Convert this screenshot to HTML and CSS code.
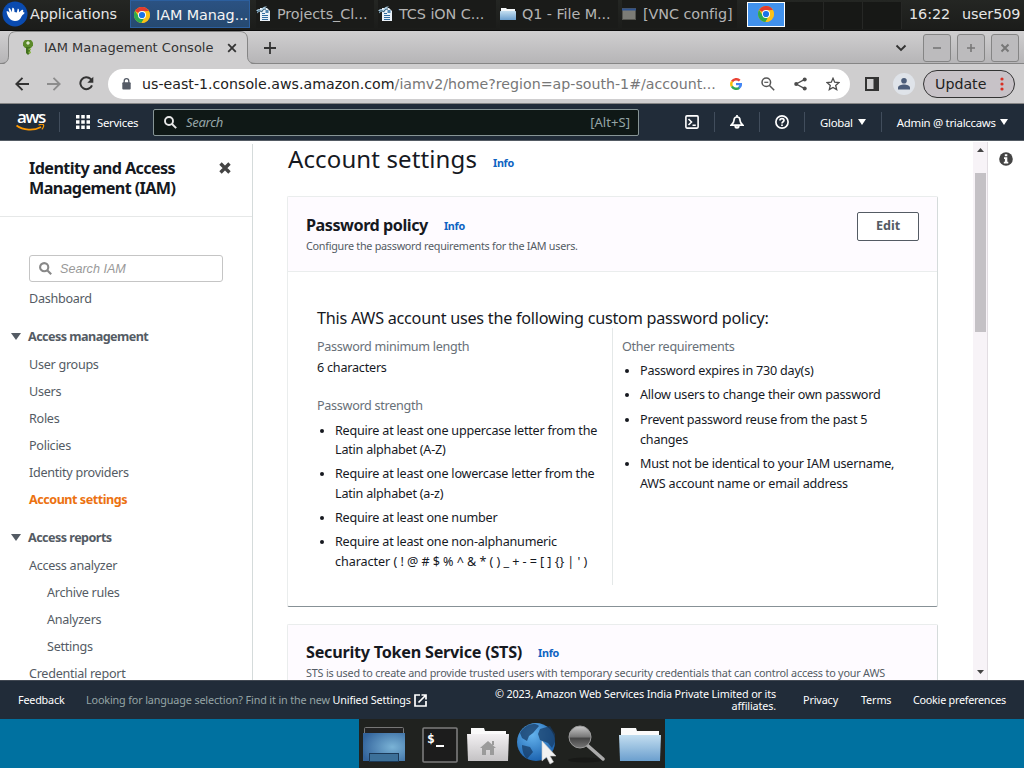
FILE: index.html
```html
<!DOCTYPE html>
<html lang="en">
<head>
<meta charset="utf-8">
<title>IAM Management Console</title>
<link rel="stylesheet" href="styles.css">
</head>
<body>
<svg width="0" height="0" class="defs">
  <defs>
    <linearGradient id="gFolder" x1="0" y1="0" x2="0" y2="1"><stop offset="0" stop-color="#c3def0"/><stop offset="1" stop-color="#6b9fce"/></linearGradient>
    <linearGradient id="gHome" x1="0" y1="0" x2="0" y2="1"><stop offset="0" stop-color="#f2f0f2"/><stop offset="1" stop-color="#c4c2c4"/></linearGradient>
    <radialGradient id="gDesk" cx=".7" cy=".5" r=".75"><stop offset="0" stop-color="#7ab3d6"/><stop offset="1" stop-color="#33649c"/></radialGradient>
    <radialGradient id="gGlobe" cx=".4" cy=".3" r=".7"><stop offset="0" stop-color="#65b4ee"/><stop offset="1" stop-color="#1d64b0"/></radialGradient>
    <linearGradient id="gLens" x1="0" y1="0" x2="0" y2="1"><stop offset="0" stop-color="#c9c9c9"/><stop offset=".5" stop-color="#777"/><stop offset=".55" stop-color="#444"/><stop offset="1" stop-color="#777"/></linearGradient>
    <symbol id="chrome" viewBox="0 0 16 16">
      <circle cx="8" cy="8" r="8" fill="#fbc116"/>
      <path d="M8 8L1.07 4A8 8 0 0 1 14.93 4L8 4.400Z" fill="#e33b2e"/>
      <path d="M1.070 4A8 8 0 0 0 7.500 15.980L11.120 9.800 8 8 4.880 9.800Z" fill="#2da94f"/>
      <path d="M8 4.400L14.930 4.400A8 8 0 0 1 7.500 15.980L11.120 9.800Z" fill="#fbc116"/>
      <circle cx="8" cy="8" r="4" fill="#fff"/><circle cx="8" cy="8" r="3.100" fill="#1a73e8"/>
    </symbol>
    <symbol id="writer" viewBox="0 0 15 16">
      <path d="M4 2h7l3 3v10H4z" fill="#eaf1f7"/>
      <path d="M6 7.500h3M6 9.500h6M6 11.500h6M6 13.500h6" stroke="#2f6ca0" stroke-width="1"/>
      <path d="M9.500 4h3v3h-3z" fill="#4d83ad"/>
      <path d="M0 4.500c2-2 4-2 5 0 1-3 3-4.500 6-4-2 1-3 3-4.500 6-2-1-4-1-5.500 1 .5-2 0-3-1-3z" fill="#a9cbe2"/>
      <path d="M1 6c2-2 4-1 4.500 0C6.500 4 8 3 10 3" fill="none" stroke="#24495f" stroke-width="1"/>
    </symbol>
  </defs>
</svg>

<div class="taskbar">
  <div class="apps">
    <svg width="26" height="26" viewBox="0 0 26 26"><circle cx="13" cy="13" r="12.500" fill="#0a4bb0"/><path d="M4.500 10.500c1-.6 2.200 0 3.200 1.500L6.500 7.500c1.200-.7 2.200.3 3.200 3.700l.6-4.200c1.200-.6 2.200.8 2.200 4l2.300.4.900-3.600c1.200-.4 1.500 1 1.300 3.400l3-2.500c1.400-.3 1.700 1 .9 2.400l1.600.4c.2 1.400-1.800 1.800-3 3.900-1.200 3.200-3.300 4.600-6.500 4.600-4.500 0-7.500-4-8.500-9.500z" fill="#fff"/></svg>
    <span>Applications</span>
  </div>
  <div class="task active"><svg width="16" height="16"><use href="#chrome"/></svg><span>IAM Manag...</span></div>
  <div class="task"><svg width="15" height="16"><use href="#writer"/></svg><span>Projects_Cl...</span></div>
  <div class="task"><svg width="15" height="16"><use href="#writer"/></svg><span>TCS iON C...</span></div>
  <div class="task"><svg width="16" height="14" viewBox="0 0 16 14"><path d="M1 1h5l1 1h8v5H1z" fill="#f3f6f8"/><rect x="0" y="4" width="16" height="9" rx=".5" fill="url(#gFolder)"/></svg><span>Q1 - File M...</span></div>
  <div class="task vnc"><svg width="14" height="12" viewBox="0 0 14 12"><rect x=".5" y=".5" width="13" height="11" fill="#7c7c76" stroke="#55554f"/><path d="M0 1.500h14" stroke="#2f538f" stroke-width="2"/></svg><span>[VNC config]</span></div>
  <div class="pager"><i class="on"><svg width="16" height="16"><use href="#chrome"/></svg></i><i></i><i></i><i></i></div>
  <span class="clock">16:22</span><span class="user">user509</span>
</div>

<div class="tabstrip">
  <div class="tab">
    <svg class="tabshape" width="264" height="34" viewBox="0 0 264 34"><path d="M0 34V33.500C6 33.500 8.500 30 8.500 25V9C8.500 3 11 .5 17 .5H239C245 .5 247.500 3 247.500 9V25C247.500 30 250 33.500 256 33.500V34Z" fill="#cfcecf"/><path d="M0 32.500C6 32.500 8.500 30 8.500 25V9C8.500 3 11 .5 17 .5H239C245 .5 247.500 3 247.500 9V25C247.500 30 250 32.500 256 32.500H264" fill="none" stroke="#858585"/></svg>
    <svg class="key" width="10" height="15" viewBox="0 0 10 15"><path d="M2 0h6l2 2.500v3L8 8H2L0 5.500v-3z" fill="#5c8a2a"/><path d="M3 7h4v6l-2 2-2-2z" fill="#42701d"/><path d="M5.500 8.500H8v1.800H5.500zM5.500 11.500H8v1.800H5.500z" fill="#8db94a"/><path d="M4.300 1.300h1.400v1h1v1.400h-1v1H4.300v-1h-1V2.300h1z" fill="#e6efd7"/></svg>
    <span class="tabtitle">IAM Management Console</span>
    <svg width="10" height="10" viewBox="0 0 10 10" fill="none" stroke="#333" stroke-width="1.800"><path d="M1.200 1.200l7.600 7.600M8.800 1.200L1.200 8.800"/></svg>
  </div>
  <svg class="plus" width="12" height="12" viewBox="0 0 12 12" stroke="#333" stroke-width="1.800"><path d="M0 6h12M6 0v12"/></svg>
  <svg class="chev" width="12" height="8" viewBox="0 0 12 8" fill="none" stroke="#333" stroke-width="1.900"><path d="M1.500 1.500L6 6l4.500-4.500"/></svg>
  <div class="winbtns">
    <b><svg width="10" height="10" viewBox="0 0 10 10"><path d="M1 5h8" stroke="#777" stroke-width="1.600"/></svg></b>
    <b><svg width="10" height="10" viewBox="0 0 10 10"><path d="M1 5h8M5 1v8" stroke="#777" stroke-width="1.600"/></svg></b>
    <b><svg width="10" height="10" viewBox="0 0 10 10"><path d="M1.500 1.500l7 7M8.500 1.500l-7 7" stroke="#777" stroke-width="2"/></svg></b>
  </div>
</div>

<div class="toolbar">
  <svg width="14" height="14" viewBox="0 0 14 14" fill="none" stroke="#333" stroke-width="1.900"><path d="M14 7H1.500M7.500 .8L1.300 7l6.200 6.200"/></svg>
  <svg width="14" height="14" viewBox="0 0 14 14" fill="none" stroke="#8c8c8c" stroke-width="1.800"><path d="M0 7h12.500M6.500 .8L12.700 7l-6.200 6.200"/></svg>
  <svg width="15" height="15" viewBox="0 0 15 15" fill="none" stroke="#333" stroke-width="2"><path d="M13 9.300A6 6 0 1 1 11.700 3l1 1.200"/><path d="M14.300 .8v6h-6z" fill="#333" stroke="none"/></svg>
  <div class="omni">
    <svg width="9" height="12" viewBox="0 0 9 12"><rect x=".3" y="4.200" width="8.400" height="7.300" rx="1" fill="#555b66"/><path d="M2.200 5V3a2.300 2.300 0 0 1 4.600 0v2" fill="none" stroke="#555b66" stroke-width="1.300"/></svg>
    <span class="url"><em>us-east-1.console.aws.amazon.com</em>/iamv2/home?region=ap-south-1#/account...</span>
    <svg width="12" height="12" viewBox="0 0 12 12" fill="none" stroke-width="2.400"><path d="M2 3.500A5 5 0 0 1 9.700 2.600" stroke="#ea4335"/><path d="M1.900 8.400A5 5 0 0 1 2 3.500" stroke="#fbbc05"/><path d="M9.300 9.700A5 5 0 0 1 1.900 8.400" stroke="#34a853"/><path d="M6 6.100h4.900A5 5 0 0 1 9 9.900" stroke="#4285f4"/></svg>
    <svg width="14" height="14" viewBox="0 0 14 14" fill="none" stroke="#555" stroke-width="1.500"><circle cx="5.300" cy="5.300" r="4.300"/><path d="M8.500 8.500l4.700 4.700"/><path d="M3.300 5.300h4" stroke-width="1.200"/></svg>
    <svg width="13" height="14" viewBox="0 0 13 14" fill="#4d4d4d"><circle cx="2.200" cy="7" r="2"/><circle cx="10.700" cy="2.400" r="2"/><circle cx="10.700" cy="11.600" r="2"/><path d="M10.700 2.400L2.200 7l8.500 4.600" fill="none" stroke="#4d4d4d" stroke-width="1.300"/></svg>
    <svg width="14" height="14" viewBox="0 0 14 14"><path d="M7 1.300l1.700 3.900 4.200.4-3.200 2.800 1 4.200L7 10.400l-3.700 2.200 1-4.200L1.100 5.600l4.200-.4z" fill="none" stroke="#4d4d4d" stroke-width="1.300"/></svg>
  </div>
  <svg class="side" width="14" height="14" viewBox="0 0 14 14"><rect x="1" y="1" width="12" height="12" fill="none" stroke="#333" stroke-width="2"/><path d="M8.500 0H14v14H8.500z" fill="#333"/></svg>
  <svg class="avatar" width="22" height="22" viewBox="0 0 22 22"><circle cx="11" cy="11" r="11" fill="#dfe3e9"/><circle cx="11" cy="7.700" r="2.800" fill="#4b5c79"/><path d="M5 16.500v-1.700c0-2.500 3.500-3.300 6-3.300s6 .8 6 3.300v1.700z" fill="#4b5c79"/></svg>
  <div class="update"><span>Update</span><svg width="4" height="14" viewBox="0 0 4 14" fill="#d93025"><circle cx="2" cy="2" r="1.600"/><circle cx="2" cy="7" r="1.600"/><circle cx="2" cy="12" r="1.600"/></svg></div>
</div>

<header class="aws">
  <div class="logo"><b>aws</b><svg width="29" height="8" viewBox="0 0 29 8"><path d="M.5 1.500C7 6.500 18 7 25 3" fill="none" stroke="#f90" stroke-width="1.700"/><path d="M22.500 1c2-.7 4.500-.8 5-.2.500.8-.2 3.200-1.700 4.600" fill="none" stroke="#f90" stroke-width="1.200"/></svg></div>
  <i class="sep s1"></i>
  <svg class="grid" width="14" height="14" viewBox="0 0 14 14" fill="#fff"><path d="M0 0h3.500v3.500H0zM5.250 0h3.500v3.500h-3.500zM10.500 0H14v3.500h-3.500zM0 5.250h3.500v3.500H0zM5.250 5.250h3.500v3.500h-3.500zM10.500 5.250H14v3.500h-3.500zM0 10.500h3.500V14H0zM5.250 10.500h3.500V14h-3.500zM10.500 10.500H14V14h-3.500z"/></svg>
  <span class="services">Services</span>
  <div class="search"><svg width="13" height="13" viewBox="0 0 13 13" fill="none" stroke="#e8e8e8" stroke-width="1.900"><circle cx="5" cy="5" r="4"/><path d="M8 8l4.200 4.200"/></svg><em>Search</em><span>[Alt+S]</span></div>
  <svg class="shell" width="14" height="14" viewBox="0 0 14 14" fill="none" stroke="#fff" stroke-width="1.600"><rect x=".9" y=".9" width="12.200" height="12.200" rx="1"/><path d="M3.500 4l3 3-3 3M7.500 10.200h3.300"/></svg>
  <i class="sep"></i>
  <svg width="14" height="14" viewBox="0 0 14 14" fill="none" stroke="#fff" stroke-width="1.700"><path d="M7 0v2M7 2C4.800 2 4 3.500 4 5.300 4 7.500 3 8.700 1.200 10.200h11.600C11 8.700 10 7.500 10 5.300 10 3.500 9.200 2 7 2z"/><path d="M5 11.200c.3 2.400 3.700 2.400 4 0" fill="#fff"/></svg>
  <i class="sep"></i>
  <svg width="14" height="14" viewBox="0 0 14 14" fill="none" stroke="#fff" stroke-width="1.700"><circle cx="7" cy="7" r="6.100"/><path d="M4.900 5.500C5 2.800 9.100 3 9 5.400 8.900 6.800 7 6.800 7 8.600M7 9.500v1.600"/></svg>
  <i class="sep"></i>
  <span class="global">Global</span><u></u>
  <i class="sep"></i>
  <span class="acct">Admin @ trialccaws</span><u></u>
</header>

<main class="view">
  <nav class="sidebar">
    <div class="navhead"><h2>Identity and Access<br>Management (IAM)</h2><svg width="12" height="12" viewBox="0 0 12 12" stroke="#444" stroke-width="3.400"><path d="M1.500 1.500l9 9M10.500 1.500l-9 9"/></svg></div>
    <div class="find"><svg width="13" height="13" viewBox="0 0 13 13" fill="none" stroke="#888" stroke-width="2.100"><circle cx="5.200" cy="5.200" r="4.100"/><path d="M8.200 8.200l4 4"/></svg><em>Search IAM</em></div>
    <a>Dashboard</a>
    <h3><u></u>Access management</h3>
    <a>User groups</a><a>Users</a><a>Roles</a><a>Policies</a><a>Identity providers</a><a class="current">Account settings</a>
    <h3><u></u>Access reports</h3>
    <a>Access analyzer</a><a class="sub">Archive rules</a><a class="sub">Analyzers</a><a class="sub">Settings</a><a>Credential report</a>
  </nav>
  <section class="content">
    <div class="title"><h1>Account settings</h1><a class="info">Info</a></div>
    <article class="card">
      <div class="cardhead">
        <div><div class="hrow"><h2>Password policy</h2><a class="info">Info</a></div><p>Configure the password requirements for the IAM users.</p></div>
        <button>Edit</button>
      </div>
      <div class="cardbody">
        <h4>This AWS account uses the following custom password policy:</h4>
        <div class="cols">
          <div class="col">
            <label>Password minimum length</label>
            <div class="val">6 characters</div>
            <label class="strength">Password strength</label>
            <ul>
              <li>Require at least one uppercase letter from the<br>Latin alphabet (A-Z)</li>
              <li>Require at least one lowercase letter from the<br>Latin alphabet (a-z)</li>
              <li>Require at least one number</li>
              <li>Require at least one non-alphanumeric<br><span class="syms">character ( ! @ # $ % ^ &amp; * ( ) _ + - = [ ] {} | ' )</span></li>
            </ul>
          </div>
          <div class="col other">
            <label>Other requirements</label>
            <ul>
              <li>Password expires in 730 day(s)</li>
              <li>Allow users to change their own password</li>
              <li>Prevent password reuse from the past 5<br>changes</li>
              <li>Must not be identical to your IAM username,<br>AWS account name or email address</li>
            </ul>
          </div>
        </div>
      </div>
    </article>
    <article class="card next">
      <div class="cardhead"><div><div class="hrow"><h2 class="sts">Security Token Service (STS)</h2><a class="info">Info</a></div><p class="stsp">STS is used to create and provide trusted users with temporary security credentials that can control access to your AWS</p></div></div>
    </article>
  </section>
  <div class="scroll"><svg width="7" height="4" viewBox="0 0 7 4"><path d="M0 4L3.500 0 7 4z" fill="#444"/></svg><div class="thumb"></div><svg width="7" height="4" viewBox="0 0 7 4"><path d="M0 0h7L3.500 4z" fill="#444"/></svg></div>
  <aside class="help"><svg width="14" height="14" viewBox="0 0 14 14"><circle cx="7" cy="7" r="6.800" fill="#444"/><path d="M5.800 2.200h2.500v2H5.800zM5 5.300h3.300v4.500h1v1.700H4.800V9.800h1.100V7H5z" fill="#fff"/></svg></aside>
</main>

<footer class="foot">
  <span class="fb">Feedback</span>
  <span class="lang">Looking for language selection? Find it in the new <b>Unified Settings</b></span>
  <svg width="13" height="13" viewBox="0 0 13 13" fill="none" stroke="#fff" stroke-width="1.700"><path d="M6 1H1v11h11V7M7.500 1H12v4.500M12 1L4.500 8.500"/></svg>
  <span class="copy">© 2023, Amazon Web Services India Private Limited or its<br>affiliates.</span>
  <span class="privacy">Privacy</span><span class="terms">Terms</span><span class="cookie">Cookie preferences</span>
</footer>

<div class="desktop">
  <div class="dock">
    <svg class="d1" width="42" height="36" viewBox="0 0 42 36"><rect x="1.500" y=".5" width="39" height="8" rx="1" fill="#222" stroke="#777"/><rect x="0" y="6" width="42" height="28" fill="url(#gDesk)"/><rect x="6.500" y="26.500" width="29" height="8" fill="#3c7099" stroke="#1b3957"/></svg>
    <svg class="d2" width="36" height="36" viewBox="0 0 36 36"><rect x="1" y="1" width="34" height="34" rx="1" fill="#1c1c1c" stroke="#7c7c7c" stroke-width="1.600"/><text x="5" y="16" class="prompt">$</text><path d="M14 19h8" stroke="#fff" stroke-width="2"/></svg>
    <svg class="d3" width="42" height="36" viewBox="0 0 42 36"><path d="M4 1h13l1 3h21v8H4z" fill="#fafafa"/><path d="M0 7h42l-1 27H1z" fill="url(#gHome)"/><path d="M21 14l8 7h-2v7h-4v-5h-4v5h-4v-7h-2zM25 14h2v4h-2z" fill="#9b9b9b"/></svg>
    <svg class="d4" width="42" height="46" viewBox="0 0 42 46"><circle cx="19" cy="22" r="19" fill="url(#gGlobe)"/><path d="M3 13C8 4 18 2 22 6l-6 7-4 3-2 5-5-3zM5 25l8 2 3 5-6 7c-3-3-5-8-5-14zM23 9l10-3 5 8v8l-3 6-4-5-8-3-2-6z" fill="#173c67" opacity=".75"/><path d="M25 21v20l4.500-4 3.500 7 3.500-2-3.500-6h6z" fill="#f2f2f2" stroke="#c8c8c8" stroke-width=".6"/></svg>
    <svg class="d5" width="38" height="38" viewBox="0 0 38 38"><ellipse cx="18" cy="35" rx="17" ry="2.500" fill="#181917"/><path d="M20 20l16 14" stroke="#aaa" stroke-width="3.500" stroke-linecap="round"/><circle cx="13" cy="12" r="11" fill="url(#gLens)" stroke="#999"/></svg>
    <svg width="42" height="36" viewBox="0 0 42 36"><path d="M2 1h15l1 3h22v6H2z" fill="#fafafa"/><path d="M0 8h42l-1 26H1z" fill="url(#gFolder)"/></svg>
  </div>
</div>
</body>
</html>
```
FILE: styles.css
```css
* { box-sizing: border-box; }
body { margin: 0; width: 1024px; height: 768px; overflow: hidden; display: flex; flex-direction: column; background: #fff; font-family: "Noto Sans", sans-serif; font-size: 12.6px; color: #16191f; letter-spacing: -0.22px; }
svg { display: block; flex: none; }
.defs { position: absolute; }
h1, h2, h3, h4, p, ul { margin: 0; padding: 0; }
i, em { font-style: normal; }
span, a, h1, h2, h3, h4, p, li, label { white-space: nowrap; }

.taskbar { flex: none; height: 31px; background: linear-gradient(#242623, #1b1c1a); border-bottom: 1px solid #0c0c0c; display: flex; align-items: center; font: 14.4px "DejaVu Sans", sans-serif; letter-spacing: -.08px; color: #e6e6e6; padding-bottom: 2px; }
.taskbar > * { flex: none; }
.apps { display: flex; align-items: center; gap: 2px; width: 130px; padding-left: 2px; }
.task { width: 118px; height: 28px; margin-right: 4px; display: flex; align-items: center; gap: 6px; color: #b4b4b4; background: #1a1b19; }
.task.active { width: 120px; margin: 0 6px 0 0; padding: 1px 0 0 4px; background: linear-gradient(#2b5283, #26496f); box-shadow: inset 0 0 0 1px #2c5f9e; color: #f4f4f4; }
.task.vnc { width: 115px; margin: 0 10px 0 0; gap: 7px; }
.pager { display: flex; height: 27px; margin-top: 2px; }
.pager i { width: 39px; background: #171816; border-right: 1px solid #262725; }
.pager i.on { width: 38px; height: 25px; background: #4191ec; border: 1px solid #fff; display: flex; align-items: center; justify-content: center; }
.clock { margin-left: 7px; }
.user { margin-left: 12px; }

.tabstrip { flex: none; height: 33px; background: linear-gradient(#d0cfd0, #b5b4b6); box-shadow: inset 0 -1px #858585; display: flex; align-items: center; }
.tabstrip > * { flex: none; }
.tab { position: relative; display: flex; align-items: center; width: 264px; height: 33px; padding-left: 23px; }
.tabshape { position: absolute; left: 0; top: 0; }
.key { position: relative; }
.tab .tabtitle { position: relative; margin-left: 11px; width: 183px; font: 13px "DejaVu Sans", sans-serif; letter-spacing: 0; color: #333; }
.tab svg:last-child { position: relative; }
.plus { margin-right: 619px; }
.chev { margin-right: 16px; }
.winbtns { display: flex; gap: 6px; }
.winbtns b { width: 28px; height: 28px; border: 1px solid #858585; border-radius: 3px; display: flex; align-items: center; justify-content: center; background: #bcbbbd; }

.toolbar { flex: none; height: 40px; background: #cfcecf; border-bottom: 1px solid #858585; display: flex; align-items: center; padding-left: 15px; font: 14.2px "DejaVu Sans", sans-serif; letter-spacing: 0; gap: 18px; }
.toolbar > * { flex: none; }
.omni { margin-left: -4px; width: 742px; height: 30px; border-radius: 15px; background: #fff; display: flex; align-items: center; padding-left: 14px; gap: 19px; }
.url { margin-left: -8px; width: 569px; color: #777; flex: none; }
.url em { color: #222; }
.side { margin-left: -3px; }
.avatar { margin-left: -4px; }
.update { margin-left: -10px; width: 92px; height: 28px; border: 1px solid #333; border-radius: 14px; background: #c7c2c7; display: flex; align-items: center; justify-content: space-between; padding: 0 10px 0 11px; color: #222; }

.aws { flex: none; height: 37px; background: #212c39; border-bottom: 1px solid #545b64; display: flex; align-items: center; padding-left: 16px; color: #fff; font-size: 11.4px; letter-spacing: -.28px; }
.aws > * { flex: none; }
.logo { width: 28px; height: 20px; }
.logo b { display: block; font: 600 17px/9px "Open Sans", sans-serif; letter-spacing: -1.3px; height: 12px; padding-left: 1px; }
.sep { width: 1px; height: 20px; background: #414d5c; margin: 0 15px; }
.sep.s1 { margin: 0 16px 0 15px; }
.services { margin-left: 7px; width: 56px; }
.search { width: 486px; height: 27px; border: 1px solid #879596; border-radius: 2px; background: #0f1816; display: flex; align-items: center; padding: 0 8px 0 10px; }
.search em { font-style: italic; font-size: 13px; color: #95a5a6; margin-left: 9px; flex: 1; }
.search span { font-size: 13px; color: #95a5a6; letter-spacing: .05px; }
.shell { margin-left: 46px; }
.aws u { border: 4px solid transparent; border-top: 6px solid #fff; border-bottom: 0; margin-left: 5px; }
.acct + u { margin-left: 4px; }

.view { flex: none; height: 539px; display: flex; overflow: hidden; background: #fff; }
.view > * { flex: none; }
.sidebar { width: 253px; height: 536px; margin-top: 3px; border-right: 1px solid #d5dbdb; letter-spacing: -.28px; }
.navhead { height: 73px; border-bottom: 1px solid #e6e8e8; padding: 14px 21px 0 29px; display: flex; justify-content: space-between; }
.navhead h2 { font-size: 16.2px; line-height: 20px; letter-spacing: -.6px; }
.navhead svg { margin-top: 4px; }
.find { margin: 38px 29px 3px; height: 27px; width: 194px; border: 1px solid #c5c5c5; border-radius: 3px; display: flex; align-items: center; padding-left: 9px; gap: 8px; font: italic 12.6px "Liberation Sans", sans-serif; letter-spacing: 0; color: #999; }
.find em { font-style: italic; }
.sidebar a { display: block; height: 27px; line-height: 27px; padding-left: 29px; color: #545b64; }
.sidebar a.sub { padding-left: 47px; }
.sidebar a.current { color: #ec7211; font-weight: bold; letter-spacing: -.48px; }
.sidebar h3 { margin: 11px 0 1px; height: 27px; line-height: 27px; font-size: 12.6px; color: #545b64; display: flex; align-items: center; padding-left: 11px; letter-spacing: -.55px; }
.sidebar h3 u { border: 5px solid transparent; border-top: 7px solid #545b64; border-bottom: 0; margin-right: 7px; }

.content { width: 720px; padding-left: 34px; }
.title { height: 55px; display: flex; padding: 2px 0 0 1px; }
.title h1 { font-weight: normal; font-size: 24px; line-height: 32px; letter-spacing: .12px; width: 205px; }
.info { font-size: 10.8px; font-weight: bold; color: #0e64c2; letter-spacing: -.3px; }
.title .info { line-height: 40px; }
.card { width: 651px; height: 411px; border: 1px solid #eaeded; border-right-color: #d5dbdb; border-bottom-color: #879196; border-radius: 2px; }
.card.next { margin-top: 17px; }
.cardhead { height: 75px; background: #fefbff; border-bottom: 1px solid #eaeded; padding: 15px 18px 0; display: flex; justify-content: space-between; }
.next .cardhead { padding-top: 14px; }
.hrow { display: flex; gap: 16px; height: 26px; }
.hrow h2 { font-size: 16.2px; line-height: 26px; letter-spacing: -.47px; }
.hrow h2.sts { letter-spacing: -.25px; }
.hrow .info { line-height: 28px; }
.cardhead p { font-size: 10.8px; line-height: 16px; color: #545b64; letter-spacing: -.27px; }
.cardhead p.stsp { letter-spacing: -.19px; }
.cardhead button { width: 62px; height: 29px; border: 1px solid #545b64; border-radius: 2px; background: #fff; color: #545b64; font: bold 12.6px "Noto Sans", sans-serif; padding: 0 0 2px; }
.cardbody { padding: 35px 20px 0 29px; }
.cardbody h4 { font-weight: normal; font-size: 16.2px; line-height: 22px; height: 21px; letter-spacing: -.25px; }
.cols { display: flex; height: 257px; }
.col { flex: none; width: 296px; padding-top: 9px; border-right: 1px solid #e4e8e8; }
.col.other { width: 300px; border: 0; padding-left: 9px; }
label { display: block; line-height: 20px; color: #687078; letter-spacing: -.3px; }
.val { height: 20px; line-height: 20px; margin-top: 1px; }
.strength { margin-top: 18px; }
.col ul { padding-left: 18px; margin-top: 4.700px; }
.other ul { margin-top: 4px; }
.col li { line-height: 19.400px; margin-bottom: 4.900px; }
.other li { line-height: 19.800px; margin-bottom: 4.700px; }
.syms { letter-spacing: -.06px; }

.scroll { width: 15px; background: #f7f3f7; border-right: 1px solid #e2dde2; padding: 6px 0; margin-top: 1px; display: flex; flex-direction: column; align-items: center; }
.thumb { width: 11px; height: 159px; margin: 21px 0 auto 1px; background: #c4c1c5; }
.help { padding: 11px 0 0 11px; }

.foot { flex: none; height: 39px; background: #212c39; border-top: 1px solid #414852; display: flex; align-items: center; padding: 0 0 0 18px; font-size: 10.800px; line-height: 12px; letter-spacing: -.14px; color: #fff; }
.foot > * { flex: none; }
.fb { width: 68px; letter-spacing: -.2px; }
.lang { width: 328px; color: #95a5a6; }
.lang b { font-weight: normal; color: #fff; }
.copy { width: 349px; text-align: right; margin-right: 27px; }
.privacy { width: 58px; }
.terms { width: 52px; }
.cookie { letter-spacing: -.26px; }

.desktop { flex: 1; background: #0071a0; display: flex; justify-content: center; }
.dock { width: 306px; height: 49px; background: #20221f; display: flex; align-items: center; padding: 3px 4px 0; }
.d1 { margin-right: 17px; }
.d2 { margin-right: 9px; }
.d3 { margin-right: 8px; }
.d4 { margin: -4px 8px 0 0; }
.d5 { margin: -2px 14px 0 0; }
.prompt { font: bold 13px "DejaVu Sans Mono", monospace; fill: #fff; }
```
